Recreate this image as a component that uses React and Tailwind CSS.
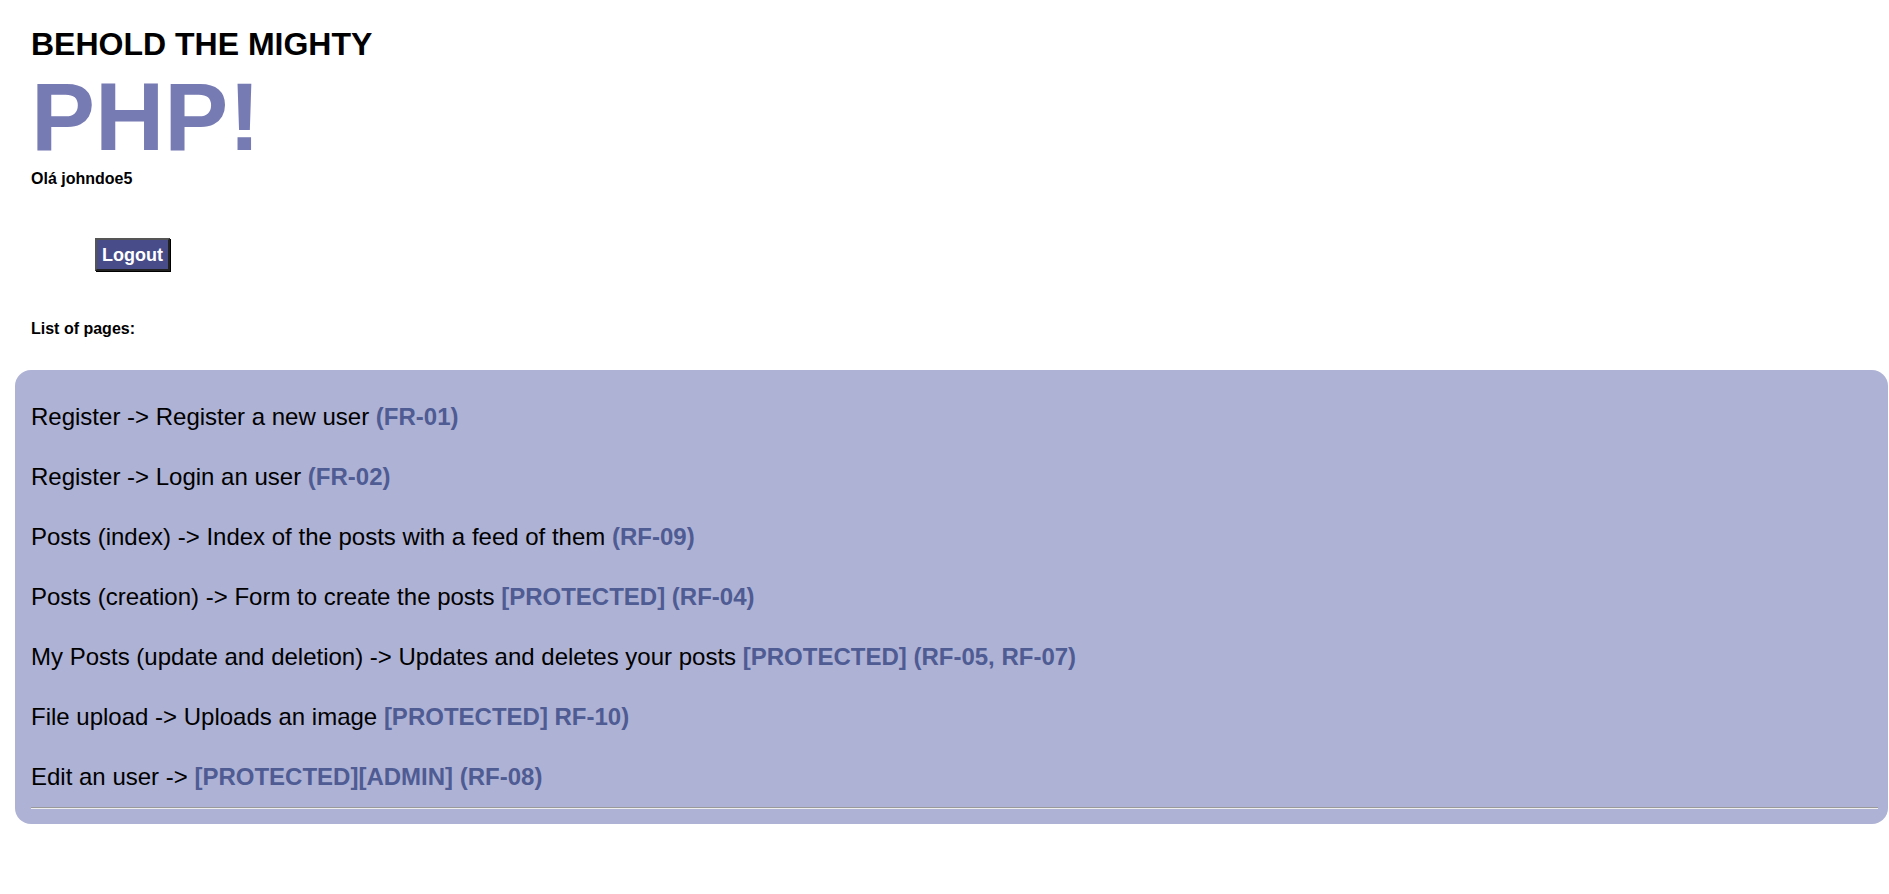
import React from "react";

const items = [
  ["Register -> Register a new user ", "(FR-01)"],
  ["Register -> Login an user ", "(FR-02)"],
  ["Posts (index) -> Index of the posts with a feed of them ", "(RF-09)"],
  ["Posts (creation) -> Form to create the posts ", "[PROTECTED] (RF-04)"],
  ["My Posts (update and deletion) -> Updates and deletes your posts ", "[PROTECTED] (RF-05, RF-07)"],
  ["File upload -> Uploads an image ", "[PROTECTED] RF-10)"],
  ["Edit an user -> ", "[PROTECTED][ADMIN] (RF-08)"],
];

export default function App() {
  return (
    <div
      className="min-h-[894px] bg-white pl-[15px] pr-[1px] pb-10 text-black"
      style={{ fontFamily: '"Liberation Sans", Arial, sans-serif' }}
    >
      <div className="flex flex-col items-start pl-[16px]">
        <h1 className="mt-[28px] text-[32px] font-bold leading-none">BEHOLD THE MIGHTY</h1>
        <div className="mt-[9px] text-[96px] font-bold leading-none text-[#777BB3]">PHP!</div>
        <h5 className="mt-[6px] text-[16px] font-bold leading-none">Olá johndoe5</h5>
        <button className="ml-[64px] mt-[51px] h-[33px] border-2 border-t-[#555555] border-l-[#555555] border-r-[#222222] border-b-[#222222] bg-[#484C89] px-[5px] text-[18px] font-bold leading-none text-white shadow-[1px_1px_0_#000]">
          Logout
        </button>
        <h5 className="mt-[50px] text-[16px] font-bold leading-none">List of pages:</h5>
      </div>
      <div className="mt-[33px] rounded-[16px] bg-[#AEB2D5] pl-[16px] pr-[10px] pt-[29px] pb-[15px]">
        <div className="flex flex-col gap-[24px]">
          {items.map(([a, b], i) => (
            <p key={i} className="text-[24px] leading-[36px]">
              {a}
              <b className="font-bold text-[#4F5B93]">{b}</b>
            </p>
          ))}
        </div>
        <div className="mt-[12px] border-t border-b border-t-[#9a9a9a] border-b-[#eeeeee]" />
      </div>
    </div>
  );
}
